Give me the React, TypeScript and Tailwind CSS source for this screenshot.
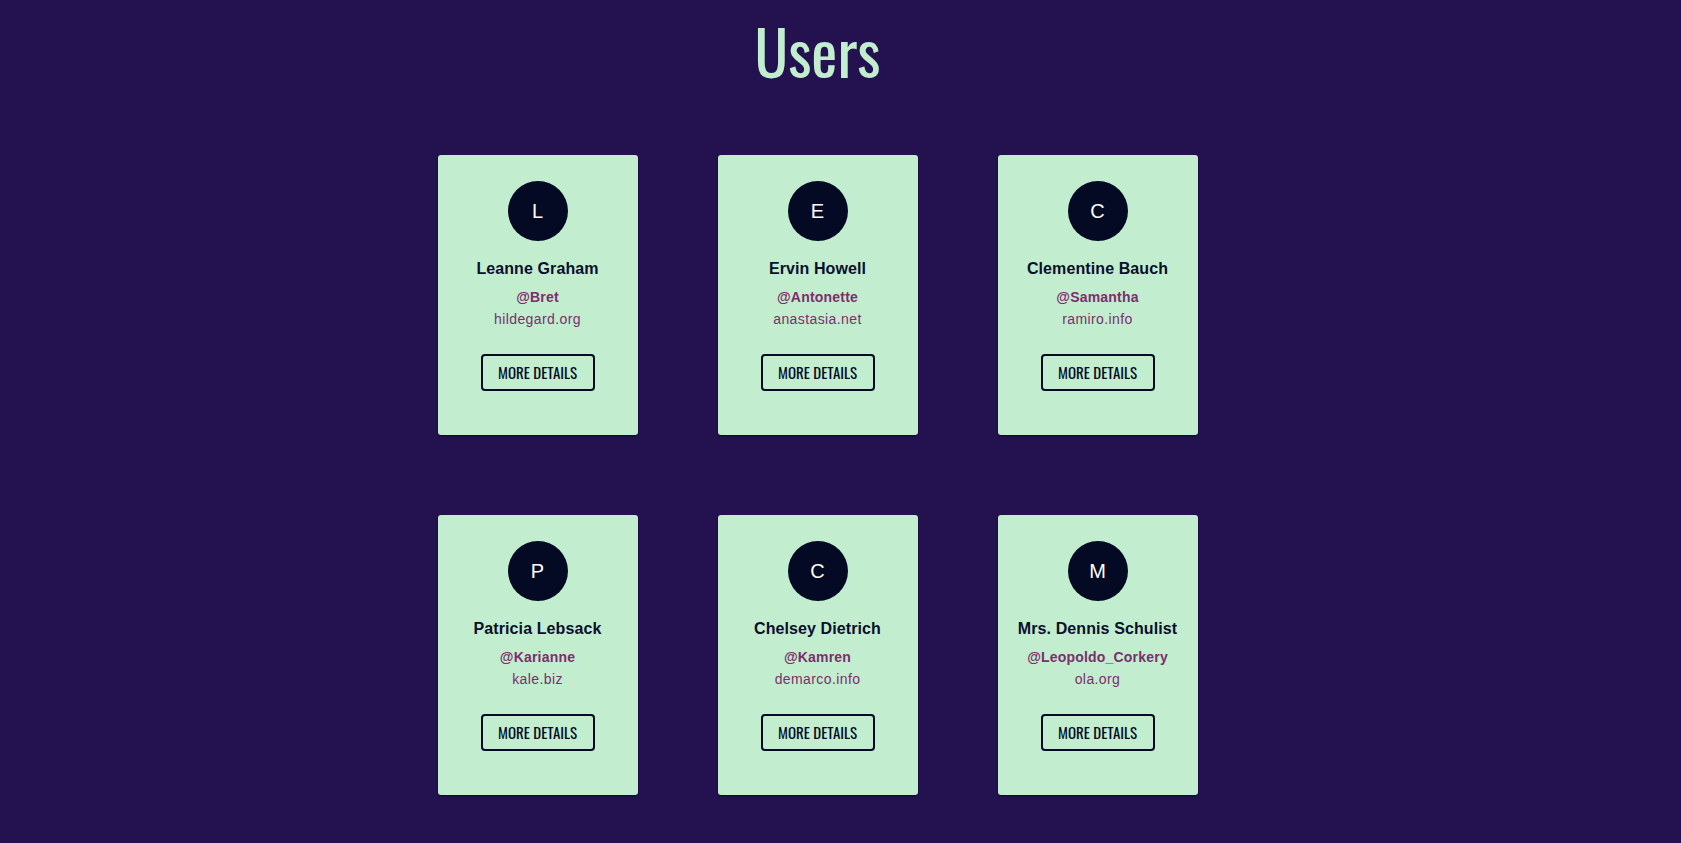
const users = [
    { name: 'Leanne Graham', username: 'Bret', website: 'hildegard.org' },
    { name: 'Ervin Howell', username: 'Antonette', website: 'anastasia.net' },
    { name: 'Clementine Bauch', username: 'Samantha', website: 'ramiro.info' },
    { name: 'Patricia Lebsack', username: 'Karianne', website: 'kale.biz' },
    { name: 'Chelsey Dietrich', username: 'Kamren', website: 'demarco.info' },
    { name: 'Mrs. Dennis Schulist', username: 'Leopoldo_Corkery', website: 'ola.org' },
]

type User = (typeof users)[number]

const narrow = "font-['Oswald','Liberation_Sans_Narrow','DejaVu_Sans_Condensed',sans-serif]"

function UserCard({ user }: { user: User }) {
    return (
        <div className="w-[200px] h-[280px] bg-[#c2edce] rounded-[3px] shadow-[0_1px_2px_rgba(0,0,0,0.5)] flex flex-col items-center font-['Liberation_Sans',Arial,sans-serif]">
            <div className="mt-[26px] w-[60px] h-[60px] rounded-full bg-[#050a24] flex items-center justify-center text-white text-[20px]">
                {user.name[0]}
            </div>
            <h3 className="mt-[18px] text-[16px] leading-[20px] font-bold text-[#0a0f2c] tracking-[0.1px]">{user.name}</h3>
            <p className="mt-[9px] text-[14px] leading-[18px] font-bold text-[#7b2f6e] tracking-[0.2px]">@{user.username}</p>
            <p className="mt-[4px] text-[14px] leading-[18px] text-[#7b2f6e] tracking-[0.4px]">{user.website}</p>
            <button
                className={`mt-[26px] w-[114px] h-[37px] border-2 border-[#050a24] rounded-[4px] text-[15px] leading-none text-[#050a24] ${narrow}`}
            >
                MORE DETAILS
            </button>
        </div>
    )
}

export default function App() {
    return (
        <div className="min-h-screen bg-[#24114f] pr-[46px] pb-[60px]">
            <h1 className={`pt-[14px] text-center text-[62px] leading-[72px] text-[#c2edce] ${narrow}`}>Users</h1>
            <div className="mt-[69px] grid grid-cols-[repeat(3,200px)] gap-20 justify-center">
                {users.map((u) => (
                    <UserCard key={u.username} user={u} />
                ))}
            </div>
        </div>
    )
}
